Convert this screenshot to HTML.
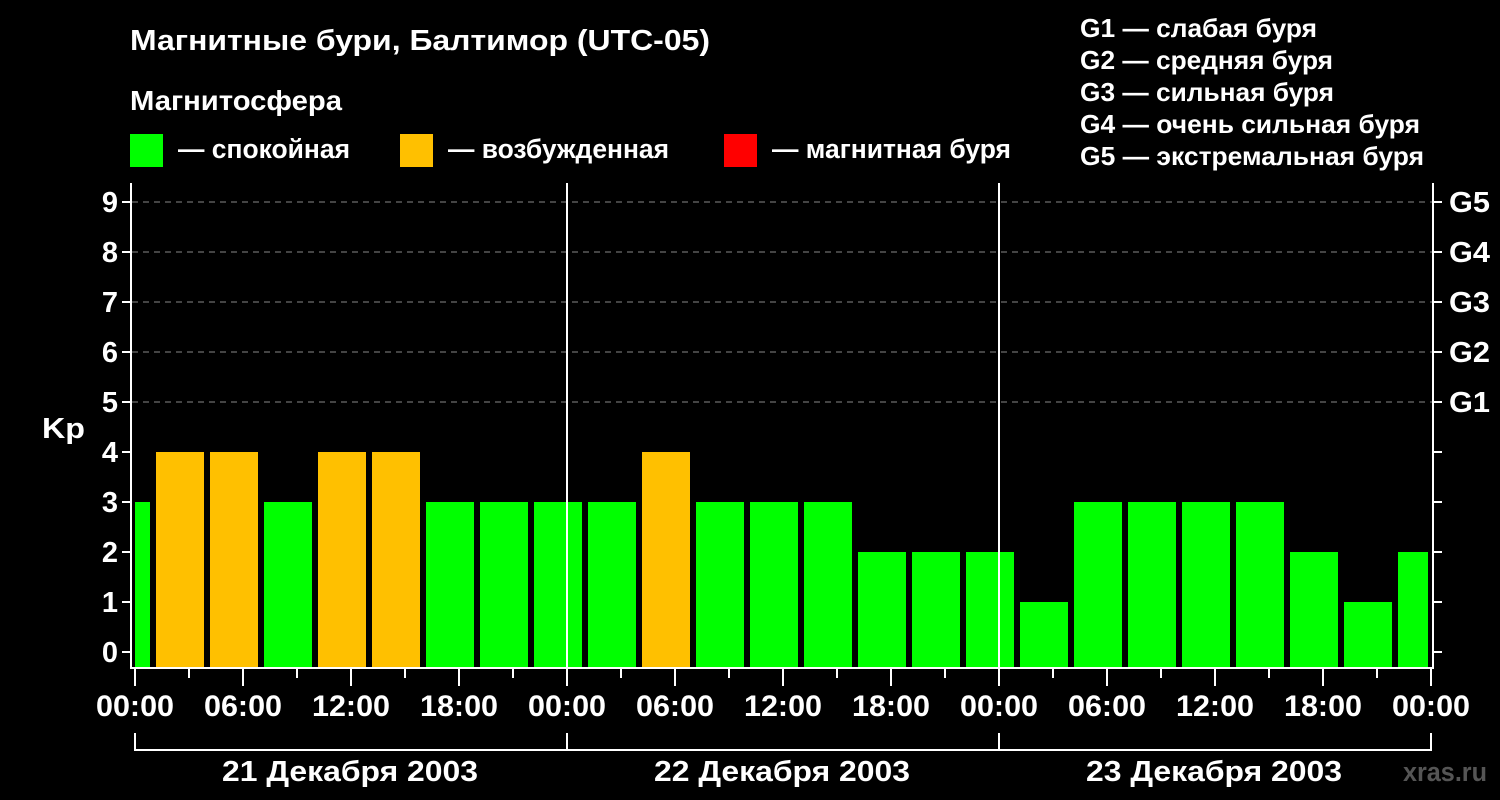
<!DOCTYPE html><html><head><meta charset="utf-8"><style>body{margin:0;background:#000;width:1500px;height:800px;overflow:hidden}svg{display:block}text{font-family:"Liberation Sans",sans-serif;font-weight:bold;fill:#fff}</style></head><body>
<svg width="1500" height="800" viewBox="0 0 1500 800">
<text x="130" y="50" font-size="29" textLength="580" lengthAdjust="spacingAndGlyphs">Магнитные бури, Балтимор (UTC-05)</text>
<text x="130" y="110" font-size="28" textLength="212" lengthAdjust="spacingAndGlyphs">Магнитосфера</text>
<rect x="130" y="134" width="33" height="33" fill="#00ff00"/><text x="178" y="158" font-size="27" textLength="172" lengthAdjust="spacingAndGlyphs">— спокойная</text>
<rect x="400" y="134" width="33" height="33" fill="#ffc000"/><text x="448" y="158" font-size="27" textLength="221" lengthAdjust="spacingAndGlyphs">— возбужденная</text>
<rect x="724" y="134" width="33" height="33" fill="#ff0000"/><text x="772" y="158" font-size="27" textLength="239" lengthAdjust="spacingAndGlyphs">— магнитная буря</text>
<g font-size="26"><text x="1080" y="37" textLength="237" lengthAdjust="spacingAndGlyphs">G1 — слабая буря</text><text x="1080" y="69" textLength="253" lengthAdjust="spacingAndGlyphs">G2 — средняя буря</text><text x="1080" y="101" textLength="254" lengthAdjust="spacingAndGlyphs">G3 — сильная буря</text><text x="1080" y="133" textLength="340" lengthAdjust="spacingAndGlyphs">G4 — очень сильная буря</text><text x="1080" y="165" textLength="344" lengthAdjust="spacingAndGlyphs">G5 — экстремальная буря</text></g>
<g stroke="#888" stroke-width="1" stroke-dasharray="6,5"><line x1="132" y1="202" x2="1432" y2="202"/><line x1="132" y1="252" x2="1432" y2="252"/><line x1="132" y1="302" x2="1432" y2="302"/><line x1="132" y1="352" x2="1432" y2="352"/><line x1="132" y1="402" x2="1432" y2="402"/></g>
<g fill="#00ff00">
<rect x="135" y="502" width="15" height="166"/>
<rect x="264" y="502" width="48" height="166"/>
<rect x="426" y="502" width="48" height="166"/><rect x="480" y="502" width="48" height="166"/><rect x="534" y="502" width="48" height="166"/><rect x="588" y="502" width="48" height="166"/>
<rect x="696" y="502" width="48" height="166"/><rect x="750" y="502" width="48" height="166"/><rect x="804" y="502" width="48" height="166"/>
<rect x="858" y="552" width="48" height="116"/><rect x="912" y="552" width="48" height="116"/><rect x="966" y="552" width="48" height="116"/>
<rect x="1020" y="602" width="48" height="66"/>
<rect x="1074" y="502" width="48" height="166"/><rect x="1128" y="502" width="48" height="166"/><rect x="1182" y="502" width="48" height="166"/><rect x="1236" y="502" width="48" height="166"/>
<rect x="1290" y="552" width="48" height="116"/><rect x="1344" y="602" width="48" height="66"/><rect x="1398" y="552" width="30" height="116"/>
</g>
<g fill="#ffc000"><rect x="156" y="452" width="48" height="216"/><rect x="210" y="452" width="48" height="216"/><rect x="318" y="452" width="48" height="216"/><rect x="372" y="452" width="48" height="216"/><rect x="642" y="452" width="48" height="216"/></g>
<g stroke="#fff" stroke-width="2" fill="none">
<path d="M131 183V668H1433V183"/>
<path d="M567 183V668M999 183V668"/>
<path d="M122 202H131M122 252H131M122 302H131M122 352H131M122 402H131M122 452H131M122 502H131M122 552H131M122 602H131M122 652H131"/>
<path d="M1433 202H1442M1433 252H1442M1433 302H1442M1433 352H1442M1433 402H1442M1433 452H1442M1433 502H1442M1433 552H1442M1433 602H1442M1433 652H1442"/>
<path d="M135 668V686M243 668V686M351 668V686M459 668V686M567 668V686M675 668V686M783 668V686M891 668V686M999 668V686M1107 668V686M1215 668V686M1323 668V686M1431 668V686"/>
<path d="M189 668V678M297 668V678M405 668V678M513 668V678M621 668V678M729 668V678M837 668V678M945 668V678M1053 668V678M1161 668V678M1269 668V678M1377 668V678"/>
<path d="M135 733V750H1431V733M567 733V750M999 733V750"/>
</g>
<g font-size="29" text-anchor="end"><text x="118" y="212">9</text><text x="118" y="262">8</text><text x="118" y="312">7</text><text x="118" y="362">6</text><text x="118" y="412">5</text><text x="118" y="462">4</text><text x="118" y="512">3</text><text x="118" y="562">2</text><text x="118" y="612">1</text><text x="118" y="662">0</text></g>
<text x="42" y="438" font-size="29" textLength="43" lengthAdjust="spacingAndGlyphs">Kp</text>
<g font-size="29"><text x="1449" y="212" textLength="41" lengthAdjust="spacingAndGlyphs">G5</text><text x="1449" y="262" textLength="41" lengthAdjust="spacingAndGlyphs">G4</text><text x="1449" y="312" textLength="41" lengthAdjust="spacingAndGlyphs">G3</text><text x="1449" y="362" textLength="41" lengthAdjust="spacingAndGlyphs">G2</text><text x="1449" y="412" textLength="41" lengthAdjust="spacingAndGlyphs">G1</text></g>
<g font-size="30">
<text x="96" y="716" textLength="78" lengthAdjust="spacingAndGlyphs">00:00</text><text x="204" y="716" textLength="78" lengthAdjust="spacingAndGlyphs">06:00</text><text x="312" y="716" textLength="78" lengthAdjust="spacingAndGlyphs">12:00</text><text x="420" y="716" textLength="78" lengthAdjust="spacingAndGlyphs">18:00</text><text x="528" y="716" textLength="78" lengthAdjust="spacingAndGlyphs">00:00</text><text x="636" y="716" textLength="78" lengthAdjust="spacingAndGlyphs">06:00</text><text x="744" y="716" textLength="78" lengthAdjust="spacingAndGlyphs">12:00</text><text x="852" y="716" textLength="78" lengthAdjust="spacingAndGlyphs">18:00</text><text x="960" y="716" textLength="78" lengthAdjust="spacingAndGlyphs">00:00</text><text x="1068" y="716" textLength="78" lengthAdjust="spacingAndGlyphs">06:00</text><text x="1176" y="716" textLength="78" lengthAdjust="spacingAndGlyphs">12:00</text><text x="1284" y="716" textLength="78" lengthAdjust="spacingAndGlyphs">18:00</text><text x="1392" y="716" textLength="78" lengthAdjust="spacingAndGlyphs">00:00</text></g>
<g font-size="29">
<text x="222" y="781" textLength="256" lengthAdjust="spacingAndGlyphs">21 Декабря 2003</text><text x="654" y="781" textLength="256" lengthAdjust="spacingAndGlyphs">22 Декабря 2003</text><text x="1086" y="781" textLength="256" lengthAdjust="spacingAndGlyphs">23 Декабря 2003</text></g>
<text x="1403" y="781" font-size="27" textLength="84" lengthAdjust="spacingAndGlyphs" style="fill:#555">xras.ru</text>
</svg></body></html>
